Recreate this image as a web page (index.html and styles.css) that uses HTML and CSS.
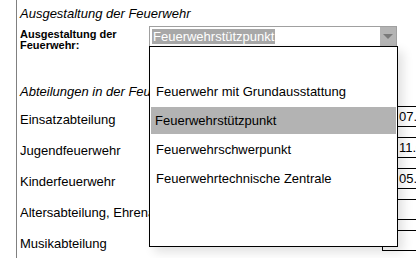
FILE: index.html
```html
<!DOCTYPE html>
<html lang="de">
<head>
  <meta charset="UTF-8">
  <meta name="viewport" content="width=device-width, initial-scale=1.0">
  <title>Ausgestaltung der Feuerwehr</title>
  <link rel="stylesheet" href="styles.css">
</head>
<body>
  <div class="page">
    <div class="section-title">Ausgestaltung der Feuerwehr</div>
    <div class="form-row">
      <label class="label">Ausgestaltung der Feuerwehr:</label>
      <div class="select-wrap">
        <div class="select">
          <span class="select-value">Feuerwehrstützpunkt</span>
          <span class="select-btn"><span class="arrow"></span></span>
        </div>
        <ul class="options">
          <li class="option blank"></li>
          <li class="option">Feuerwehr mit Grundausstattung</li>
          <li class="option active">Feuerwehrstützpunkt</li>
          <li class="option">Feuerwehrschwerpunkt</li>
          <li class="option">Feuerwehrtechnische Zentrale</li>
        </ul>
      </div>
    </div>

    <div class="section-title sub">Abteilungen in der Feuerwehr</div>
    <div class="rows">
      <div class="row"><span class="row-label">Einsatzabteilung</span><span class="field">07.05.</span></div>
      <div class="row"><span class="row-label">Jugendfeuerwehr</span><span class="field">11.03.</span></div>
      <div class="row"><span class="row-label">Kinderfeuerwehr</span><span class="field">05.09.</span></div>
      <div class="row"><span class="row-label">Altersabteilung, Ehrenabteilung</span><span class="field"></span></div>
      <div class="row"><span class="row-label">Musikabteilung</span><span class="field"></span></div>
    </div>
  </div>
</body>
</html>
```

FILE: styles.css
```css
body{
  margin: 0;
  background: #fff;
  font-family: "Liberation Sans", Arial, sans-serif;
  color: #000;
  overflow: hidden;
  height: 258px;
}
.page{
  margin-left: 16px;
  border-left: 1px solid #808080;
  padding-left: 3px;
  padding-top: 6px;
  height: 260px;
  width: 420px;
}
.section-title{
  font-style: italic;
  font-size: 13px;
  line-height: 16px;
}
.section-title.sub{
  margin-top: 36px;
  white-space: nowrap;
}
.form-row{
  display: grid;
  grid-template-columns: 129px 248px;
  margin-top: 4px;
  height: 22px;
}
.label{
  font-weight: bold;
  font-size: 11px;
  line-height: 11px;
  padding-top: 3px;
  padding-right: 20px;
}
.select-wrap{
  position: relative;
  z-index: 5;
}
.select{
  display: flex;
  align-items: center;
  height: 19px;
  border: 1px solid #a0a0a0;
  background: #fff;
}
.select-value{
  font-size: 13px;
  line-height: 15px;
  margin-left: 2px;
  padding: 0 1px;
  background: #a8a8a8;
  color: #fff;
}
.select-btn{
  margin-left: auto;
  width: 16px;
  height: 19px;
  background: #b4b4b4;
  display: flex;
  justify-content: center;
  align-items: center;
}
.arrow{
  width: 0;
  height: 0;
  border-left: 5px solid transparent;
  border-right: 5px solid transparent;
  border-top: 5px solid #7a7a7a;
}
.options{
  position: absolute;
  left: 0;
  top: 20px;
  width: 247px;
  height: 199px;
  margin: 0;
  padding: 0;
  list-style: none;
  background: #fff;
  border: 1px solid #000;
  box-shadow: 5px 5px 10px rgba(0, 0, 0, 0.12);
}
.option{
  height: 29px;
  line-height: 29px;
  font-size: 13px;
  padding-left: 5px;
  margin: 0 1px;
}
.option.blank{
  height: 30px;
}
.option.active{
  background: #b3b3b3;
  padding-left: 4px;
  line-height: 27px;
  height: 27px;
  margin-top: 1px;
  margin-bottom: 1px;
}
.rows{
  margin-top: 4px;
}
.row{
  display: grid;
  grid-template-columns: 362px 80px;
  height: 31px;
}
.row-label{
  font-size: 13px;
  line-height: 16px;
  padding-top: 8px;
  white-space: nowrap;
  overflow: hidden;
}
.field{
  margin-top: 2px;
  height: 19px;
  border: 1px solid #000;
  font-size: 13px;
  line-height: 19px;
  padding-left: 16px;
  white-space: nowrap;
  overflow: hidden;
}
```
